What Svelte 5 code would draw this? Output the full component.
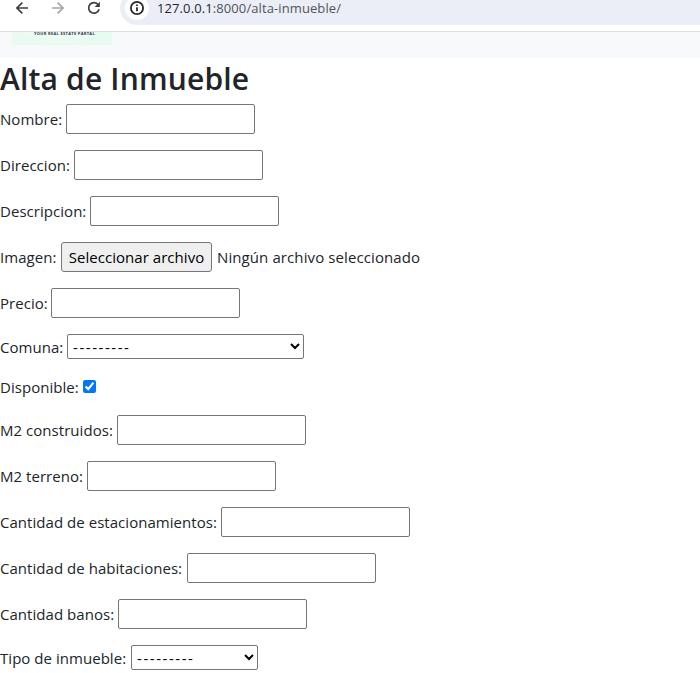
<script>
  const fields = [
    { label: 'Nombre:', left: 66, type: 'text' },
    { label: 'Direccion:', left: 74, type: 'text' },
    { label: 'Descripcion:', left: 90, type: 'text' },
    { label: 'Imagen:', left: 61, type: 'file' },
    { label: 'Precio:', left: 51, type: 'text' },
    { label: 'Comuna:', left: 67, type: 'select', width: 237 },
    { label: 'Disponible:', left: 83, type: 'checkbox' },
    { label: 'M2 construidos:', left: 117, type: 'text' },
    { label: 'M2 terreno:', left: 87, type: 'text' },
    { label: 'Cantidad de estacionamientos:', left: 221, type: 'text' },
    { label: 'Cantidad de habitaciones:', left: 187, type: 'text' },
    { label: 'Cantidad banos:', left: 118, type: 'text' },
    { label: 'Tipo de inmueble:', left: 131, type: 'select', width: 127 }
  ];
</script>

<div class="page">
  <header class="toolbar">
    <svg class="nav" width="108" height="31" viewBox="0 0 108 31" fill="none" stroke="#3c4043" stroke-width="1.7">
      <path d="M28 8H17M22.3 2.6L16.9 8l5.4 5.4" />
      <path d="M52 8h11M57.7 2.6L63.1 8l-5.4 5.4" stroke="#a5a7aa" />
      <path d="M98.3 4.8A5.3 5.3 0 1 0 99.1 9.2" />
      <path d="M99.9 1.8v5.3h-5.3z" fill="#3c4043" stroke="none" />
    </svg>
    <div class="address">
      <span class="info">
        <svg width="16" height="16" viewBox="0 0 16 16" fill="none" stroke="#27292c" stroke-width="1.8">
          <circle cx="8" cy="8" r="6.1" />
          <path d="M8 7.2v4M8 4.4v1.6" />
        </svg>
      </span>
      <span class="url"><b>127.0.0.1</b>:8000/alta-inmueble/</span>
    </div>
  </header>
  <nav class="navbar">
    <div class="logo"><span>YOUR REAL ESTATE PARTAL</span></div>
  </nav>
  <h1>Alta de Inmueble</h1>
  <form>
    {#each fields as f, i}
      <div class="row {f.type}">
        <label for="field-{i}" style="width: {f.left}px">{f.label}</label>
        {#if f.type === 'text'}
          <input id="field-{i}" type="text" />
        {:else if f.type === 'file'}
          <button id="field-{i}" type="button">Seleccionar archivo</button>
          <span class="filename">Ningún archivo seleccionado</span>
        {:else if f.type === 'select'}
          <select id="field-{i}" style="width: {f.width}px"><option>---------</option></select>
        {:else}
          <input id="field-{i}" type="checkbox" checked />
        {/if}
      </div>
    {/each}
  </form>
</div>

<style>
  :global(body) { margin: 0; background: #fff; }
  .page {
    height: 673px;
    overflow: hidden;
    background: #fff;
    color: #212529;
    font-family: "Open Sans", "Noto Sans", sans-serif;
    font-size: 15px;
    letter-spacing: 0.04px;
  }
  .toolbar {
    display: flex;
    box-sizing: border-box;
    height: 32px;
    border-bottom: 1px solid #dcdee0;
  }
  .nav { flex: none; }
  .address {
    display: flex;
    flex: 1;
    height: 34px;
    margin: -9px 0 0 12px;
    border-radius: 17px 0 0 17px;
    background: #ebeef7;
  }
  .info {
    display: flex;
    align-items: center;
    justify-content: center;
    width: 24px;
    height: 24px;
    margin: 5px 0 0 5px;
    border-radius: 50%;
    background: #fff;
  }
  .url {
    margin-left: 8px;
    font-size: 13px;
    line-height: 34px;
    color: #51545a;
    letter-spacing: 0.1px;
    white-space: nowrap;
  }
  .url b { font-weight: 400; color: #25272b; }
  .navbar { height: 26px; background: #f8f9fa; }
  .logo {
    box-sizing: border-box;
    width: 100px;
    height: 13px;
    margin-left: 12px;
    padding-left: 5px;
    background: radial-gradient(ellipse at 50% 0, #f3fcf4 0, #e8fbf1 65%);
    text-align: center;
    line-height: 4px;
  }
  .logo span {
    display: block;
    font-size: 4px;
    font-weight: 700;
    letter-spacing: 0.32px;
    color: #27364a;
    white-space: nowrap;
  }
  h1 {
    height: 38px;
    margin: 2px 0 6px;
    font-size: 30px;
    font-weight: 600;
    line-height: 38px;
    letter-spacing: 0.17px;
    white-space: nowrap;
  }
  form { display: flex; flex-direction: column; gap: 16px; }
  .row { display: flex; flex: none; align-items: center; height: 30px; white-space: nowrap; }
  .row.select { height: 25px; }
  .row.checkbox { height: 24px; }
  label { flex: none; }
  input[type="text"] {
    box-sizing: border-box;
    width: 189px;
    height: 30px;
    margin: 0;
    border: 1px solid #767676;
    border-radius: 2px;
    background: #fff;
  }
  input[type="checkbox"] { width: 13px; height: 13px; margin: 0 0 2px; }
  button {
    box-sizing: border-box;
    width: 151px;
    height: 30px;
    padding: 0;
    border: 1px solid #767676;
    border-radius: 3px;
    background: #efefef;
    color: #000;
    font: inherit;
    letter-spacing: 0.04px;
  }
  .filename { margin-left: 5px; letter-spacing: 0.1px; }
  select {
    box-sizing: border-box;
    height: 25px;
    margin: 0;
    padding: 0 0 0 1px;
    border: 1px solid #767676;
    border-radius: 2px;
    background: #fff;
    color: #000;
    font: inherit;
    letter-spacing: 1.55px;
  }
</style>
